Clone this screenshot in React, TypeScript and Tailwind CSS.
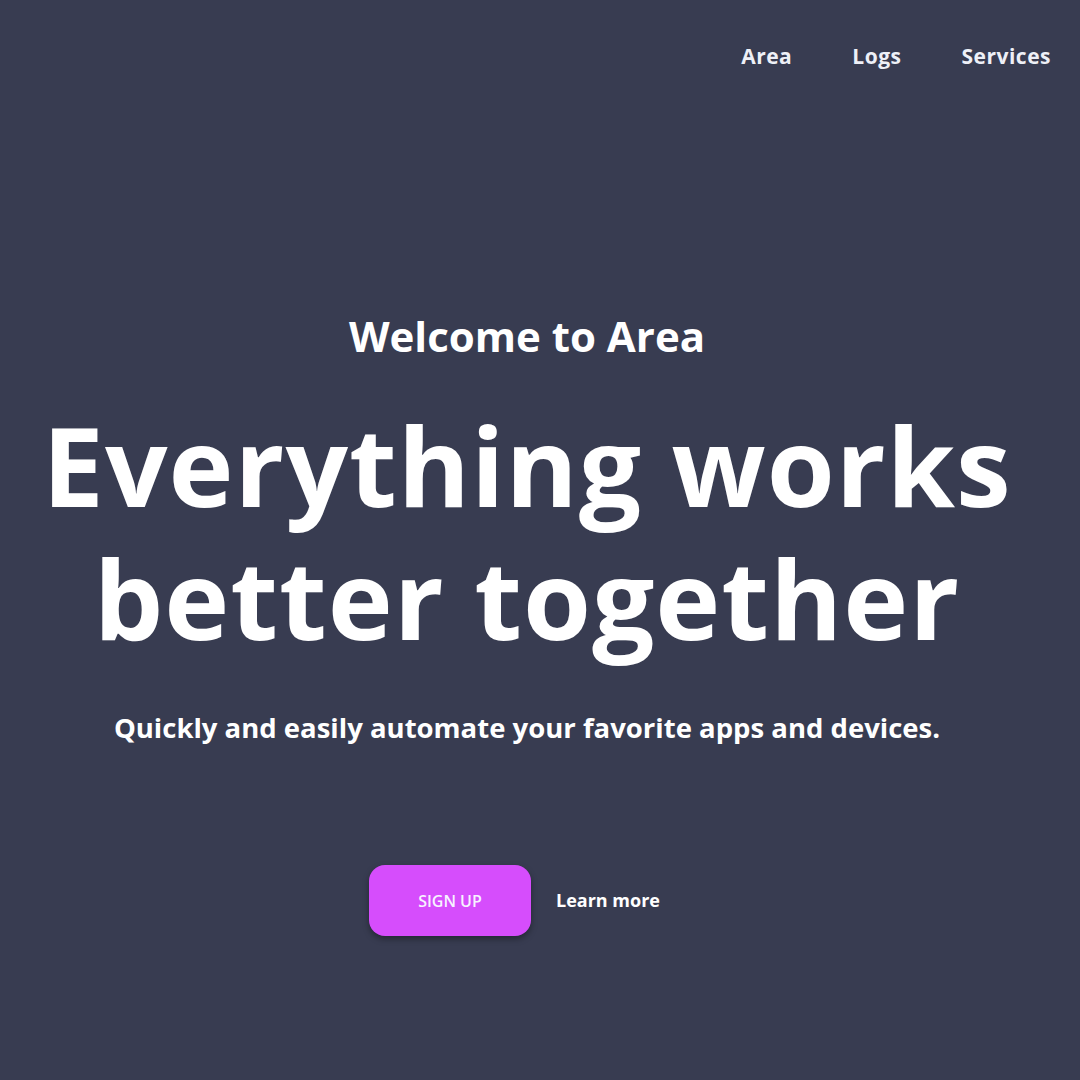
import React from "react";

export default function App() {
  const font = { fontFamily: '"Open Sans", "Noto Sans", sans-serif' };
  return (
    <div className="min-h-[1080px] w-full bg-[#383c51] text-white" style={font}>
      <nav className="flex h-[114px] items-center justify-end gap-[60px] pr-[29px] text-[21px] font-bold text-[#eef0f7]">
        <a className="tracking-[0.5px]">Area</a>
        <a className="tracking-[0.5px]">Logs</a>
        <a className="tracking-[0.5px]">Services</a>
      </nav>
      <main className="flex flex-col items-center pr-[26px] pt-[194px]">
        <h2 className="text-[42px] font-bold leading-[56px]">Welcome to Area</h2>
        <h1 className="mt-[34px] flex flex-col items-center text-center text-[110px] font-bold leading-[133px] tracking-[1px]">
          <span>Everything works</span>
          <span>better together</span>
        </h1>
        <p className="mt-[43px] text-[27.5px] font-bold">Quickly and easily automate your favorite apps and devices.</p>
        <div className="mt-[117px] flex items-center gap-[25px] pr-[25px]">
          <button className="h-[71px] w-[162px] rounded-[16px] bg-[#d64dfc] text-[16px] font-semibold uppercase text-[#f7f2ff] shadow-[0_3px_6px_rgba(0,0,0,0.35)]">
            Sign up
          </button>
          <a className="text-[18px] font-bold">Learn more</a>
        </div>
      </main>
    </div>
  );
}
